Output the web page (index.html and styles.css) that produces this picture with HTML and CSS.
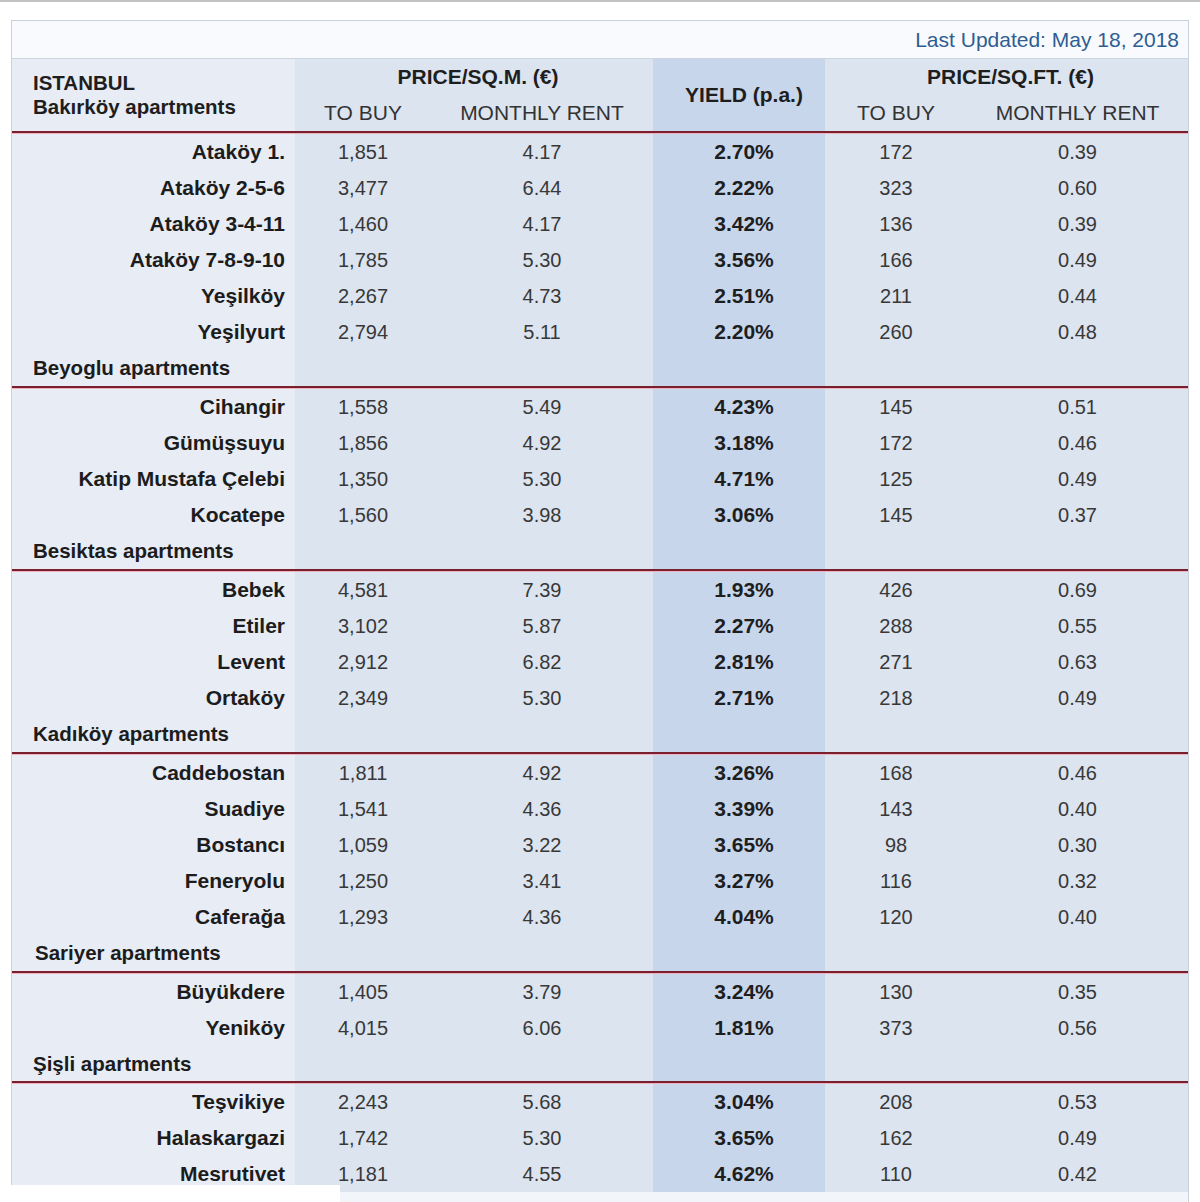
FILE: index.html
```html
<!DOCTYPE html>
<html lang="tr">
<head>
<meta charset="utf-8">
<title>Istanbul apartments</title>
<link rel="stylesheet" href="styles.css">
</head>
<body>
<div class="topline"></div>
<div class="wrap">
<table class="grid">
  <colgroup>
    <col class="w-name"><col class="w-buy"><col class="w-rent"><col class="w-yield"><col class="w-buy2"><col class="w-rent2">
  </colgroup>
  <thead>
    <tr class="updated"><td colspan="6">Last Updated: May 18, 2018</td></tr>
    <tr class="h1">
      <th rowspan="2" class="name hname"><div>ISTANBUL</div><div>Bakırköy apartments</div></th>
      <th colspan="2" class="col group">PRICE/SQ.M. (€)</th>
      <th rowspan="2" class="yield">YIELD (p.a.)</th>
      <th colspan="2" class="col group">PRICE/SQ.FT. (€)</th>
    </tr>
    <tr class="h2">
      <th class="col sub">TO BUY</th>
      <th class="col sub">MONTHLY RENT</th>
      <th class="col sub">TO BUY</th>
      <th class="col sub">MONTHLY RENT</th>
    </tr>
  </thead>
  <tbody>
    <tr class="sep"><td colspan="6"><div></div></td></tr>
    <tr><td class="name">Ataköy 1.</td><td class="col">1,851</td><td class="col">4.17</td><td class="yield">2.70%</td><td class="col">172</td><td class="col">0.39</td></tr>
    <tr><td class="name">Ataköy 2-5-6</td><td class="col">3,477</td><td class="col">6.44</td><td class="yield">2.22%</td><td class="col">323</td><td class="col">0.60</td></tr>
    <tr><td class="name">Ataköy 3-4-11</td><td class="col">1,460</td><td class="col">4.17</td><td class="yield">3.42%</td><td class="col">136</td><td class="col">0.39</td></tr>
    <tr><td class="name">Ataköy 7-8-9-10</td><td class="col">1,785</td><td class="col">5.30</td><td class="yield">3.56%</td><td class="col">166</td><td class="col">0.49</td></tr>
    <tr><td class="name">Yeşilköy</td><td class="col">2,267</td><td class="col">4.73</td><td class="yield">2.51%</td><td class="col">211</td><td class="col">0.44</td></tr>
    <tr><td class="name">Yeşilyurt</td><td class="col">2,794</td><td class="col">5.11</td><td class="yield">2.20%</td><td class="col">260</td><td class="col">0.48</td></tr>
    <tr class="label"><td class="name">Beyoglu apartments</td><td class="col"></td><td class="col"></td><td class="yield"></td><td class="col"></td><td class="col"></td></tr>
    <tr class="sep"><td colspan="6"><div></div></td></tr>
    <tr><td class="name">Cihangir</td><td class="col">1,558</td><td class="col">5.49</td><td class="yield">4.23%</td><td class="col">145</td><td class="col">0.51</td></tr>
    <tr><td class="name">Gümüşsuyu</td><td class="col">1,856</td><td class="col">4.92</td><td class="yield">3.18%</td><td class="col">172</td><td class="col">0.46</td></tr>
    <tr><td class="name">Katip Mustafa Çelebi</td><td class="col">1,350</td><td class="col">5.30</td><td class="yield">4.71%</td><td class="col">125</td><td class="col">0.49</td></tr>
    <tr><td class="name">Kocatepe</td><td class="col">1,560</td><td class="col">3.98</td><td class="yield">3.06%</td><td class="col">145</td><td class="col">0.37</td></tr>
    <tr class="label"><td class="name">Besiktas apartments</td><td class="col"></td><td class="col"></td><td class="yield"></td><td class="col"></td><td class="col"></td></tr>
    <tr class="sep"><td colspan="6"><div></div></td></tr>
    <tr><td class="name">Bebek</td><td class="col">4,581</td><td class="col">7.39</td><td class="yield">1.93%</td><td class="col">426</td><td class="col">0.69</td></tr>
    <tr><td class="name">Etiler</td><td class="col">3,102</td><td class="col">5.87</td><td class="yield">2.27%</td><td class="col">288</td><td class="col">0.55</td></tr>
    <tr><td class="name">Levent</td><td class="col">2,912</td><td class="col">6.82</td><td class="yield">2.81%</td><td class="col">271</td><td class="col">0.63</td></tr>
    <tr><td class="name">Ortaköy</td><td class="col">2,349</td><td class="col">5.30</td><td class="yield">2.71%</td><td class="col">218</td><td class="col">0.49</td></tr>
    <tr class="label"><td class="name">Kadıköy apartments</td><td class="col"></td><td class="col"></td><td class="yield"></td><td class="col"></td><td class="col"></td></tr>
    <tr class="sep"><td colspan="6"><div></div></td></tr>
    <tr><td class="name">Caddebostan</td><td class="col">1,811</td><td class="col">4.92</td><td class="yield">3.26%</td><td class="col">168</td><td class="col">0.46</td></tr>
    <tr><td class="name">Suadiye</td><td class="col">1,541</td><td class="col">4.36</td><td class="yield">3.39%</td><td class="col">143</td><td class="col">0.40</td></tr>
    <tr><td class="name">Bostancı</td><td class="col">1,059</td><td class="col">3.22</td><td class="yield">3.65%</td><td class="col">98</td><td class="col">0.30</td></tr>
    <tr><td class="name">Feneryolu</td><td class="col">1,250</td><td class="col">3.41</td><td class="yield">3.27%</td><td class="col">116</td><td class="col">0.32</td></tr>
    <tr><td class="name">Caferağa</td><td class="col">1,293</td><td class="col">4.36</td><td class="yield">4.04%</td><td class="col">120</td><td class="col">0.40</td></tr>
    <tr class="label"><td class="name lab2">Sariyer apartments</td><td class="col"></td><td class="col"></td><td class="yield"></td><td class="col"></td><td class="col"></td></tr>
    <tr class="sep"><td colspan="6"><div></div></td></tr>
    <tr><td class="name">Büyükdere</td><td class="col">1,405</td><td class="col">3.79</td><td class="yield">3.24%</td><td class="col">130</td><td class="col">0.35</td></tr>
    <tr><td class="name">Yeniköy</td><td class="col">4,015</td><td class="col">6.06</td><td class="yield">1.81%</td><td class="col">373</td><td class="col">0.56</td></tr>
    <tr class="label short"><td class="name">Şişli apartments</td><td class="col"></td><td class="col"></td><td class="yield"></td><td class="col"></td><td class="col"></td></tr>
    <tr class="sep"><td colspan="6"><div></div></td></tr>
    <tr><td class="name">Teşvikiye</td><td class="col">2,243</td><td class="col">5.68</td><td class="yield">3.04%</td><td class="col">208</td><td class="col">0.53</td></tr>
    <tr><td class="name">Halaskargazi</td><td class="col">1,742</td><td class="col">5.30</td><td class="yield">3.65%</td><td class="col">162</td><td class="col">0.49</td></tr>
    <tr><td class="name">Mesrutivet</td><td class="col">1,181</td><td class="col">4.55</td><td class="yield">4.62%</td><td class="col">110</td><td class="col">0.42</td></tr>
    <tr class="tail"><td colspan="6"></td></tr>
  </tbody>
</table>
<div class="cutout"></div>
</div>
</body>
</html>
```

FILE: styles.css
```css
html, body {
  margin: 0;
  padding: 0;
  background: #ffffff;
}
body {
  font-family: "Liberation Sans", Arial, sans-serif;
  font-size: 20px;
  color: #2a2a2a;
  height: 1202px;
  overflow: hidden;
}
.topline {
  height: 2px;
  background: #c2c2c2;
}
.wrap {
  position: relative;
  padding: 18px 0 0 11px;
}
.grid {
  border-collapse: separate;
  border-spacing: 0;
  table-layout: fixed;
  width: 1178px;
  border: 1px solid #c9d1dc;
  border-bottom: none;
}
.w-name { width: 283px; }
.w-buy { width: 136px; }
.w-rent { width: 222px; }
.w-yield { width: 172px; }
.w-buy2 { width: 142px; }
.w-rent2 { width: 221px; }

.grid td, .grid th {
  padding: 0;
  height: 36px;
  vertical-align: middle;
  white-space: nowrap;
}
.grid .updated td {
  height: 37px;
  background: #f8fafd;
  border-bottom: 1px solid #cdd5e0;
  text-align: right;
  padding-right: 9px;
  color: #2f5d92;
  font-size: 21px;
}
.grid th {
  font-weight: bold;
  font-size: 21px;
  color: #1e1e1e;
}
.grid .group {
  padding-left: 8px;
}
.grid .sub {
  font-weight: normal;
  font-size: 21px;
  color: #333333;
}
.grid .hname {
  text-align: left;
  padding-left: 21px;
  padding-top: 0;
  line-height: 24px;
  font-size: 20.5px;
}
.name {
  background: #e7ecf5;
}
.col {
  background: #dce4f0;
  text-align: center;
  color: #383838;
}
.grid .yield {
  background: #c8d6ec;
  text-align: center;
  padding-left: 10px;
  font-weight: bold;
  font-size: 21px;
  color: #1e1e1e;
}
.grid tbody .name {
  text-align: right;
  padding-right: 10px;
  font-weight: bold;
  font-size: 21px;
  color: #1c1c1c;
}
.grid tbody .label .name {
  text-align: left;
  padding-left: 21px;
  padding-right: 0;
  font-size: 20.5px;
}
.grid tbody .label .lab2 {
  padding-left: 23px;
}
.grid .short td {
  height: 35px;
}
.grid .sep td {
  height: 3px;
  line-height: 0;
  font-size: 0;
}
.sep div {
  height: 0;
  border-top: 2px solid #7a1f2d;
  border-bottom: 1px solid #efb3bf;
}
.grid .tail td {
  height: 14px;
  background: #f2f5fa;
}
.cutout {
  position: absolute;
  left: 0;
  top: 1183px;
  width: 340px;
  height: 40px;
  background: #ffffff;
}
```
